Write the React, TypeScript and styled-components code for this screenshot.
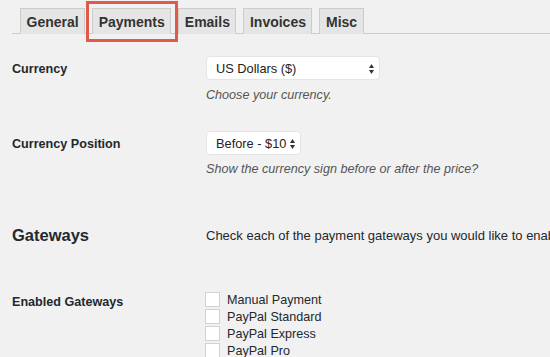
import styled, { createGlobalStyle } from "styled-components";

const GlobalStyle = createGlobalStyle`
  html, body {
    margin: 0;
    padding: 0;
    background: #f1f1f1;
  }
  body {
    width: 550px;
    height: 357px;
    overflow: hidden;
    font-family: "Liberation Sans", Arial, sans-serif;
    color: #23282d;
  }
`;

const Page = styled.div`
  padding-top: 8px;
`;

const TabBar = styled.div`
  display: flex;
  gap: 7px;
  margin-left: 12px;
  padding-left: 8px;
  border-bottom: 1px solid #ccc;
`;

const Tab = styled.div<{ $highlighted?: boolean }>`
  position: relative;
  height: 25px;
  line-height: 26px;
  padding: 0 5.5px;
  margin-bottom: -1px;
  border: 1px solid #ccc;
  border-bottom: none;
  background: #e5e5e5;
  color: #333;
  font-size: 14px;
  font-weight: bold;

  &::after {
    content: "";
    display: ${({ $highlighted }) => ($highlighted ? "block" : "none")};
    position: absolute;
    left: -7px;
    right: -8px;
    top: -8px;
    bottom: -8px;
    border: 3px solid #e05a48;
  }
`;

const Row = styled.div<{ $top: number }>`
  display: grid;
  grid-template-columns: 194px 1fr;
  padding-left: 12px;
  margin-top: ${({ $top }) => $top}px;
`;

const Label = styled.div<{ $lh?: number; $pad?: number }>`
  padding-top: ${({ $pad }) => $pad ?? 1}px;
  font-size: 12.6px;
  font-weight: bold;
  line-height: ${({ $lh }) => $lh ?? 24}px;
  color: #23282d;
`;

const Field = styled.div`
  display: flex;
  flex-direction: column;
  align-items: flex-start;
  min-width: 0;
  overflow: hidden;
`;

const Select = styled.div<{ $width: number }>`
  box-sizing: border-box;
  width: ${({ $width }) => $width}px;
  height: 24px;
  display: flex;
  align-items: center;
  justify-content: space-between;
  padding: 1px 5px 0 9px;
  background: #fff;
  border: 1px solid #e4e4e4;
  border-radius: 4px;
  font-size: 12.8px;
  color: #222;
`;

const Description = styled.div<{ $gap: number }>`
  margin-top: ${({ $gap }) => $gap}px;
  font-size: 12.6px;
  line-height: 18px;
  font-style: italic;
  color: #555;
`;

const Heading = styled.h2`
  margin: 0;
  font-size: 16.5px;
  font-weight: bold;
  line-height: 24px;
  color: #23282d;
`;

const Intro = styled.div`
  font-size: 13px;
  line-height: 24px;
  padding-top: 1px;
  white-space: nowrap;
  color: #23282d;
`;

const CheckList = styled.div`
  display: flex;
  flex-direction: column;
  margin-left: -1px;
`;

const CheckRow = styled.label`
  display: flex;
  align-items: center;
  height: 17px;
  gap: 7px;
  font-size: 12.6px;
  color: #23282d;
`;

const Box = styled.span`
  box-sizing: border-box;
  width: 15px;
  height: 15px;
  background: #fff;
  border: 1px solid #d2d2d2;
`;

const Arrows = () => (
  <svg width="5" height="10" viewBox="0 0 5 10">
    <path d="M2.5 0 L5 4 L0 4 Z" fill="#333" />
    <path d="M2.5 10 L5 6 L0 6 Z" fill="#333" />
  </svg>
);

const tabs = ["General", "Payments", "Emails", "Invoices", "Misc"];
const gateways = ["Manual Payment", "PayPal Standard", "PayPal Express", "PayPal Pro"];

export default function App() {
  return (
    <>
      <GlobalStyle />
      <Page>
        <TabBar>
          {tabs.map((t) => (
            <Tab key={t} $highlighted={t === "Payments"}>
              {t}
            </Tab>
          ))}
        </TabBar>

        <Row $top={22}>
          <Label>Currency</Label>
          <Field>
            <Select $width={174}>
              US Dollars ($)
              <Arrows />
            </Select>
            <Description $gap={6}>Choose your currency.</Description>
          </Field>
        </Row>

        <Row $top={27}>
          <Label>Currency Position</Label>
          <Field>
            <Select $width={95}>
              Before - $10
              <Arrows />
            </Select>
            <Description $gap={5}>Show the currency sign before or after the price?</Description>
          </Field>
        </Row>

        <Row $top={45}>
          <Heading>Gateways</Heading>
          <Field>
            <Intro>Check each of the payment gateways you would like to enable.</Intro>
          </Field>
        </Row>

        <Row $top={43}>
          <Label $lh={17} $pad={3}>Enabled Gateways</Label>
          <CheckList>
            {gateways.map((g) => (
              <CheckRow key={g}>
                <Box />
                {g}
              </CheckRow>
            ))}
          </CheckList>
        </Row>
      </Page>
    </>
  );
}
